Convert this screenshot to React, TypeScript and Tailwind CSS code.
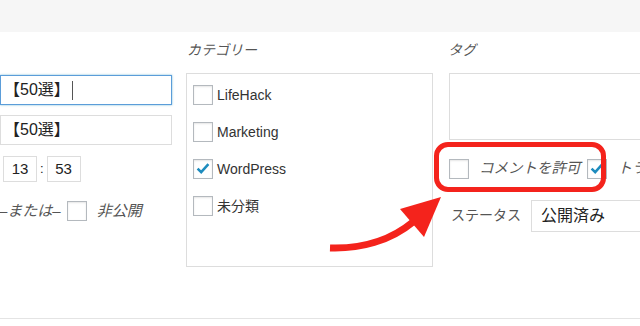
import React from "react"

const font = { fontFamily: '"Liberation Sans", Arial, "Noto Sans CJK JP", sans-serif' }

function Box({ checked = false }: { checked?: boolean }) {
  return (
    <span className="relative flex h-5 w-5 shrink-0 items-center justify-center border border-[#b4b9be] bg-white shadow-[inset_0_1px_2px_rgba(0,0,0,0.1)]">
      {checked && (
        <svg viewBox="0 0 20 20" className="h-[18px] w-[18px]">
          <path d="M4 9.5 L8 13.5 L16 4.5" fill="none" stroke="#1e8cbe" strokeWidth="2.8" />
        </svg>
      )}
    </span>
  )
}

const categories = [
  { name: "LifeHack", checked: false },
  { name: "Marketing", checked: false },
  { name: "WordPress", checked: true },
  { name: "未分類", checked: false },
]

export default function App() {
  return (
    <div className="relative h-[326px] w-[640px] overflow-hidden bg-white text-[#333]" style={font}>
      <div className="h-[32px] bg-[#f6f6f6]" />
      <div className="flex h-[287px] border-b border-[#e4e4e4]">
        {/* left column: title / slug / time */}
        <div className="flex w-[172px] shrink-0 flex-col">
          <div className="mt-[43px] flex h-[30px] items-center border border-[#5b9dd9] shadow-[0_0_2px_rgba(30,140,190,0.6)] text-[16px] text-[#222]">
            <span className="ml-[3px]">【50選】</span>
            <span className="ml-[2px] h-[19px] w-px bg-[#555]" />
          </div>
          <div className="mt-[10px] flex h-[30px] items-center border border-[#ddd] text-[16px] text-[#222]">
            <span className="ml-[3px]">【50選】</span>
          </div>
          <div className="mt-[11px] flex items-center text-[15px] text-[#222]">
            <span className="ml-[3px] flex h-[26px] w-[34px] items-center justify-center border border-[#ddd]">13</span>
            <span className="mx-[3px] text-[13px]">:</span>
            <span className="flex h-[26px] w-[34px] items-center justify-center border border-[#ddd]">53</span>
          </div>
          <div className="mt-[18px] flex items-center whitespace-nowrap text-[15px] italic text-[#555]">
            <span className="-ml-[1px]">–または–</span>
            <span className="ml-[6px]">
              <Box />
            </span>
            <span className="ml-[10px]">非公開</span>
          </div>
        </div>

        {/* category column */}
        <div className="ml-[14px] flex w-[247px] shrink-0 flex-col">
          <div className="mt-[9px] h-[18px] pl-px text-[14px] italic leading-[18px] text-[#555]">カテゴリー</div>
          <div className="mt-[14px] flex h-[194px] flex-col gap-[17px] border border-[#ddd] pl-[6px] pt-[11px]">
            {categories.map((c) => (
              <label key={c.name} className="flex h-5 items-center gap-[4px] text-[14px] text-[#333]">
                <Box checked={c.checked} />
                <span>{c.name}</span>
              </label>
            ))}
          </div>
        </div>

        {/* tag column */}
        <div className="ml-[16px] flex min-w-0 flex-1 flex-col overflow-hidden">
          <div className="mt-[9px] h-[18px] -ml-px text-[14px] italic leading-[18px] text-[#555]">タグ</div>
          <div className="mt-[14px] h-[67px] w-[240px] shrink-0 border border-[#ddd]" />
          <div className="mt-[18px] flex items-center whitespace-nowrap text-[14.5px] italic text-[#555]">
            <Box />
            <span className="ml-[10px]">コメントを許可</span>
            <span className="ml-[6px]">
              <Box checked />
            </span>
            <span className="ml-[11px]">トラックバック</span>
          </div>
          <div className="mt-[20px] flex items-center whitespace-nowrap">
            <span className="ml-[2px] text-[14px] text-[#555]">ステータス</span>
            <div className="ml-[10px] flex h-[32px] w-[140px] shrink-0 items-center border border-[#ddd] pl-[9px] text-[16px] text-[#222]">
              公開済み
            </div>
          </div>
        </div>
      </div>

      {/* annotation: red highlight and arrow */}
      <div className="absolute left-[434px] top-[142px] h-[50px] w-[172px] rounded-[14px] border-[5px] border-[#f4231c]" />
      <svg className="absolute left-0 top-0" width="640" height="326" viewBox="0 0 640 326">
        <path d="M330 248 C 360 249, 390 241, 413 222" fill="none" stroke="#f4231c" strokeWidth="7" />
        <polygon points="400,209 441,197 424,237" fill="#f4231c" />
      </svg>
    </div>
  )
}
